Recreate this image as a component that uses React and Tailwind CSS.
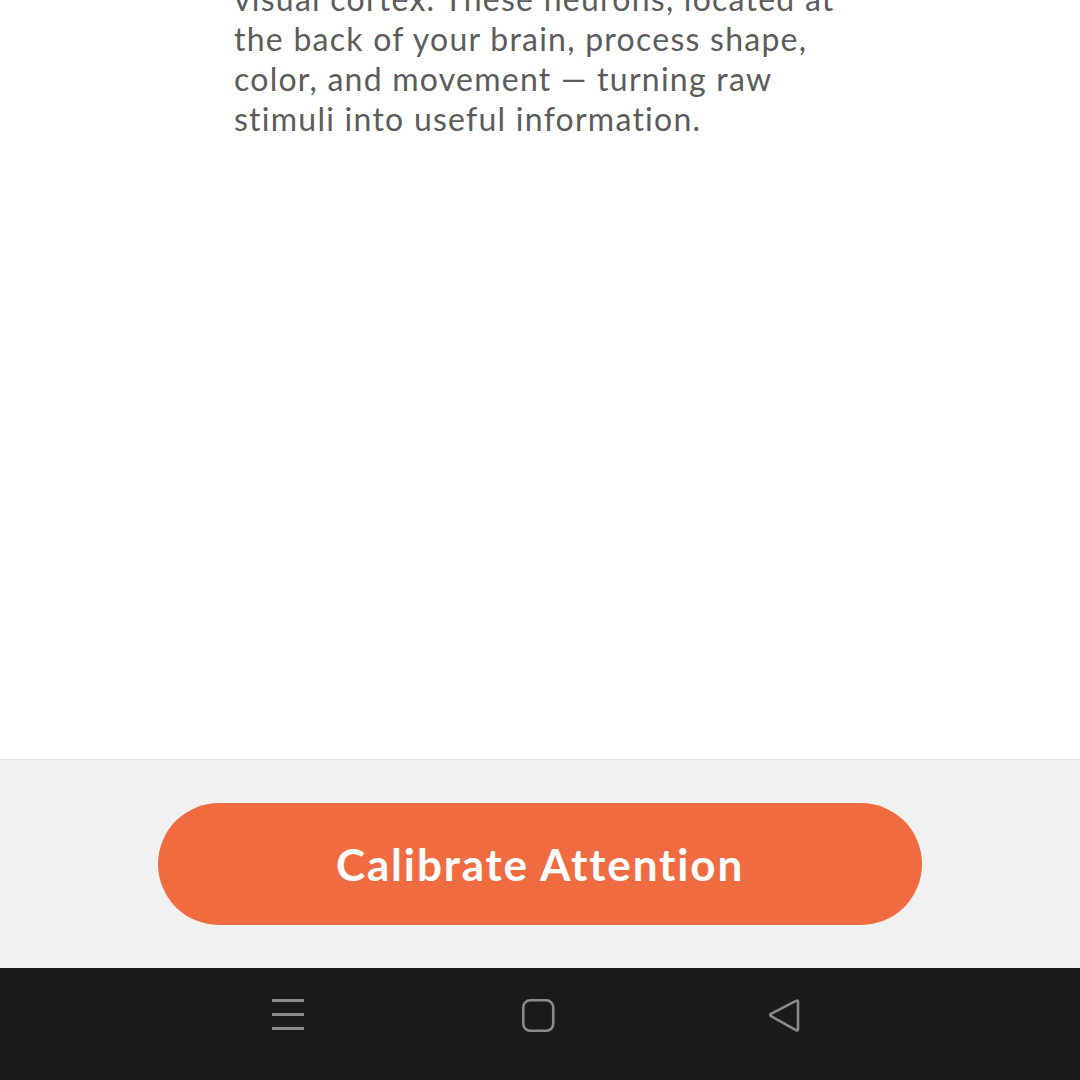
import React from "react";

const App = () => {
    return (
        <div className="flex flex-col w-[1080px] h-[1080px] overflow-hidden bg-white" style={{ fontFamily: "Lato, 'Open Sans', sans-serif" }}>
            <div className="flex-grow bg-white overflow-hidden">
                <p className="mt-[-21px] ml-[234px] text-[32px] leading-[40px] text-[#5c5c5c] tracking-[1.25px]">
                    visual cortex. These neurons, located at
                    <br />
                    the back of your brain, process shape,
                    <br />
                    color, and movement — turning raw
                    <br />
                    stimuli into useful information.
                </p>
            </div>
            <div className="h-[209px] bg-[#f1f1f1] border-t border-[#e4e4e4] flex items-center justify-center">
                <button className="w-[764px] h-[122px] rounded-full bg-[#f06b40] text-white text-[44px] font-bold tracking-[1.85px]">
                    Calibrate Attention
                </button>
            </div>
            <nav className="h-[112px] bg-[#1a1a1a] pt-[30px]">
                <div className="flex items-start pl-[272px]">
                    <svg width="33" height="32" viewBox="0 0 33 32">
                        <path d="M0 2.5h32M0 16.5h32M0 30.5h32" stroke="#8a8a8a" strokeWidth="2.8" />
                    </svg>
                    <svg className="ml-[216px]" width="34" height="34" viewBox="0 0 34 34">
                        <rect x="2.25" y="2.3" width="30" height="30.5" rx="7" fill="none" stroke="#8a8a8a" strokeWidth="2.6" />
                    </svg>
                    <svg className="ml-[212px]" width="34" height="35" viewBox="0 0 34 35">
                        <path d="M31 4 L31 31 Q31 33.3 29 32.2 L4 18.2 Q2.4 17 4 15.8 L29 2.8 Q31 1.7 31 4 Z" fill="none" stroke="#8a8a8a" strokeWidth="2.6" strokeLinejoin="round" />
                    </svg>
                </div>
            </nav>
        </div>
    );
};

export default App;
